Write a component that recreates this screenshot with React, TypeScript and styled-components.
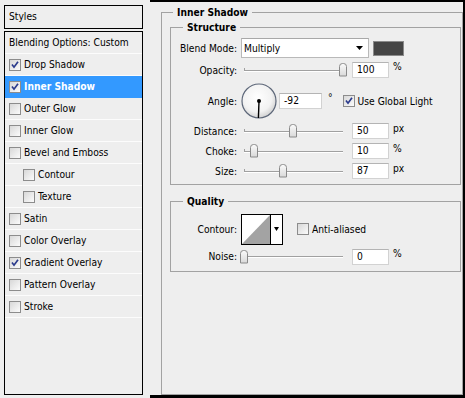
import React from 'react'
import styled, { createGlobalStyle } from 'styled-components'

const GlobalStyle = createGlobalStyle`
html, body {
  margin:0;
  padding:0;
  background:#eeeeee;
}
body {
  font-family: "DejaVu Sans Condensed", "DejaVu Sans", sans-serif;
  font-size:10.2px;
  color:#000;
}
`

const Dialog = styled.div`
display:flex;
width:465px;
height:398px;
background:#eeeeee;
overflow:hidden;
`

// left column: list of effects
const Sidebar = styled.div`
width:150px;
flex-shrink:0;
box-sizing:border-box;
padding:5px 0 0 4px;
display:flex;
flex-direction:column;
gap:2px;
`

const StylesHeader = styled.div`
width:139px;
height:24px;
box-sizing:border-box;
border:1px solid #000;
padding-left:4px;
line-height:22px;
`

const StyleList = styled.ul`
list-style:none;
margin:0;
padding:0;
width:139px;
height:364px;
box-sizing:border-box;
border:1px solid #000;
`

const StyleItem = styled.li<{ $active?: boolean; $indent?: boolean }>`
display:flex;
align-items:center;
gap:3px;
height:21px;
padding-left:${p => (p.$indent ? 18 : 4)}px;
border-bottom:1px solid ${p => (p.$active ? '#3399ff' : '#fcfcfc')};
background:${p => (p.$active ? '#3399ff' : 'transparent')};
color:${p => (p.$active ? '#fff' : '#000')};
font-weight:${p => (p.$active ? 'bold' : 'normal')};
white-space:nowrap;
`

// right side: settings
const Settings = styled.div`
flex:1;
display:flex;
flex-direction:column;
box-sizing:border-box;
border-top:2px solid #000;
border-right:2px solid #000;
border-bottom:3px solid #000;
padding:4px 0 0 11px;
`

const Group = styled.fieldset<{ $outer?: boolean }>`
margin:${p => (p.$outer ? '0' : '2px 0 0 0')};
padding:${p => (p.$outer ? '0 1px 0 8px' : '3px 0 3px 0')};
min-width:0;
border:1px solid #a2a2a2;
display:flex;
flex-direction:column;
flex:${p => (p.$outer ? 1 : 'none')};
& + & {
  margin-top:10px;
  padding-top:4px;
  padding-bottom:4px;
}
`

const GroupTitle = styled.legend<{ $outer?: boolean }>`
margin-left:${p => (p.$outer ? 3 : 12)}px;
padding:0 4px;
font-weight:bold;
line-height:13px;
`

const Row = styled.div<{ $h: number }>`
display:flex;
align-items:center;
height:${p => p.$h}px;
white-space:nowrap;
`

const Label = styled.span`
width:66px;
padding-right:4px;
text-align:right;
flex-shrink:0;
`

const Select = styled.div`
width:128px;
height:20px;
box-sizing:border-box;
border:1px solid #b9b9b9;
border-top-color:#a8a8a8;
background:#fff;
display:flex;
align-items:center;
justify-content:space-between;
padding:0 5px 0 2px;
`

const Swatch = styled.div`
width:31px;
height:15px;
box-sizing:border-box;
margin-left:4px;
background:#454545;
border:1px solid #8a8a8a;
`

const SliderBox = styled.div`
position:relative;
width:106px;
height:16px;
display:flex;
align-items:center;
flex-shrink:0;
`

const Track = styled.div`
position:relative;
flex:1;
margin:1px 4px 0 3px;
height:0;
border-top:1px solid #a0a0a0;
border-bottom:1px solid #fff;
&::before {
  content:'';
  position:absolute;
  left:0;
  top:-3px;
  width:1px;
  height:3px;
  background:#a0a0a0;
}
`

const Thumb = styled.svg`
position:absolute;
top:1px;
`

const NumberBox = styled.div<{ $w?: number }>`
width:${p => p.$w ?? 37}px;
height:16px;
box-sizing:border-box;
margin-left:5px;
padding-left:4px;
background:#fff;
border:1px solid #d2d2d2;
border-top-color:#b4b4b4;
line-height:14px;
flex-shrink:0;
`

const Unit = styled.span`
margin-left:4px;
align-self:flex-start;
padding-top:2px;
`

const Degree = styled.span`
margin-left:6px;
align-self:flex-start;
padding-top:11px;
`

const Dial = styled.svg`
flex-shrink:0;
`

const CheckLabel = styled.label<{ $gap?: number }>`
display:flex;
align-items:center;
gap:3px;
margin-left:${p => p.$gap ?? 0}px;
`

const ContourPicker = styled.div`
display:flex;
width:42px;
height:31px;
box-sizing:border-box;
border:1px solid #000;
background:#fff;
flex-shrink:0;
`

const ContourArrow = styled.div`
flex:1;
border-left:1px solid #000;
display:flex;
align-items:center;
justify-content:center;
`

const Check = ({ checked }: { checked?: boolean }) => (
  <svg width="12" height="12" viewBox="0 0 12 12" style={{ flexShrink: 0 }}>
    <defs>
      <linearGradient id="cbg" x1="0" y1="0" x2="1" y2="1">
        <stop offset="0" stopColor="#d6d6d6" />
        <stop offset="1" stopColor="#fdfdfd" />
      </linearGradient>
    </defs>
    <rect x="0.5" y="0.5" width="11" height="11" fill="url(#cbg)" stroke="#8c8c8c" />
    {checked && <path d="M3 5.6l2 2.6 4-5.4" fill="none" stroke="#2a3a8c" strokeWidth="1.7" />}
  </svg>
)

const Slider = ({ value }: { value: number }) => (
  <SliderBox>
    <Track />
    <Thumb width="8" height="14" viewBox="0 0 8 14" style={{ left: `${Math.round(value * 99) - 1}px` }}>
      <defs>
        <linearGradient id="thg" x1="0" y1="0" x2="0" y2="1">
          <stop offset="0" stopColor="#fbfbfb" />
          <stop offset="1" stopColor="#d9d9d9" />
        </linearGradient>
      </defs>
      <path d="M0.5 3.5a3 3 0 0 1 3-3h1a3 3 0 0 1 3 3v9.5h-7z" fill="url(#thg)" stroke="#8a8a8a" />
    </Thumb>
  </SliderBox>
)

const DownArrow = ({ w = 7 }: { w?: number }) => (
  <svg width={w} height="4" viewBox={`0 0 ${w} 4`}>
    <path d={`M0 0h${w}l-${w / 2} 4z`} fill="#000" />
  </svg>
)

const effects = [
  { name: 'Drop Shadow', checked: true },
  { name: 'Inner Shadow', checked: true, active: true },
  { name: 'Outer Glow' },
  { name: 'Inner Glow' },
  { name: 'Bevel and Emboss' },
  { name: 'Contour', indent: true },
  { name: 'Texture', indent: true },
  { name: 'Satin' },
  { name: 'Color Overlay' },
  { name: 'Gradient Overlay', checked: true },
  { name: 'Pattern Overlay' },
  { name: 'Stroke' },
]

const sliders = [
  { label: 'Distance:', value: 0.495, num: '50', unit: 'px' },
  { label: 'Choke:', value: 0.106, num: '10', unit: '%' },
  { label: 'Size:', value: 0.389, num: '87', unit: 'px' },
]

const App: React.FC = () => {
  const angle = -92
  const rad = (angle * Math.PI) / 180
  const endX = 18 + Math.cos(rad) * 17
  const endY = 18 - Math.sin(rad) * 17

  return (
    <Dialog>
      <GlobalStyle />
      <Sidebar>
        <StylesHeader>Styles</StylesHeader>
        <StyleList>
          <StyleItem>Blending Options: Custom</StyleItem>
          {effects.map(e => (
            <StyleItem key={e.name} $active={e.active} $indent={e.indent}>
              <Check checked={e.checked} />
              {e.name}
            </StyleItem>
          ))}
        </StyleList>
      </Sidebar>

      <Settings>
        <Group $outer>
          <GroupTitle $outer>Inner Shadow</GroupTitle>

          <Group>
            <GroupTitle>Structure</GroupTitle>
            <Row $h={22}>
              <Label>Blend Mode:</Label>
              <Select>
                Multiply
                <DownArrow />
              </Select>
              <Swatch />
            </Row>
            <Row $h={22}>
              <Label>Opacity:</Label>
              <Slider value={1} />
              <NumberBox>100</NumberBox>
              <Unit>%</Unit>
            </Row>
            <Row $h={40}>
              <Label>Angle:</Label>
              <Dial width="36" height="36" viewBox="0 0 36 36">
                <defs>
                  <radialGradient id="dialg" cx="0.45" cy="0.4" r="0.6">
                    <stop offset="0" stopColor="#ffffff" />
                    <stop offset="0.7" stopColor="#f2f2f2" />
                    <stop offset="1" stopColor="#d2d2d2" />
                  </radialGradient>
                </defs>
                <circle cx="18" cy="18" r="17" fill="url(#dialg)" stroke="#5d6779" strokeWidth="1.2" />
                <line x1="18" y1="18" x2={endX} y2={endY} stroke="#000" strokeWidth="1.4" />
                <circle cx="18" cy="18" r="2" fill="#000" />
              </Dial>
              <NumberBox $w={43} style={{ marginLeft: 2 }}>-92</NumberBox>
              <Degree>°</Degree>
              <CheckLabel $gap={10}>
                <Check checked />
                Use Global Light
              </CheckLabel>
            </Row>
            {sliders.map(s => (
              <Row $h={20} key={s.label}>
                <Label>{s.label}</Label>
                <Slider value={s.value} />
                <NumberBox>{s.num}</NumberBox>
                <Unit>{s.unit}</Unit>
              </Row>
            ))}
          </Group>

          <Group>
            <GroupTitle>Quality</GroupTitle>
            <Row $h={34}>
              <Label>Contour:</Label>
              <ContourPicker>
                <svg width="28" height="29" viewBox="0 0 28 29">
                  <path d="M0 29L28 0V29z" fill="#a3a3a3" />
                </svg>
                <ContourArrow>
                  <DownArrow w={5} />
                </ContourArrow>
              </ContourPicker>
              <CheckLabel $gap={14}>
                <Check />
                Anti-aliased
              </CheckLabel>
            </Row>
            <Row $h={21}>
              <Label>Noise:</Label>
              <Slider value={0} />
              <NumberBox>0</NumberBox>
              <Unit>%</Unit>
            </Row>
          </Group>
        </Group>
      </Settings>
    </Dialog>
  )
}

export default App
